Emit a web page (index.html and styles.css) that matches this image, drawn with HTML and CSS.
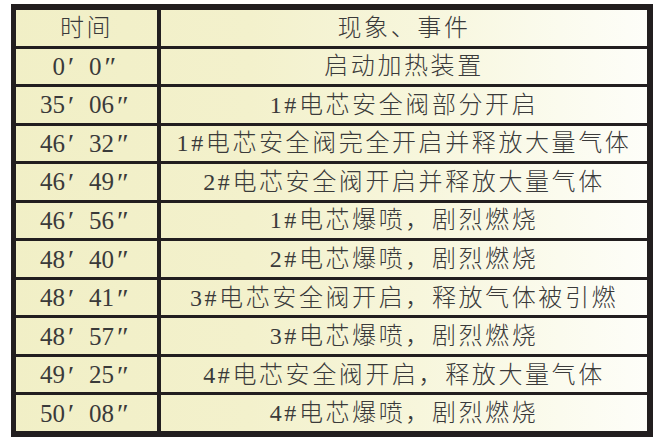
FILE: index.html
```html
<!DOCTYPE html>
<html lang="zh">
<head>
<meta charset="utf-8">
<link rel="stylesheet" href="styles.css">
</head>
<body>
<div class="table">
  <div class="cell">时间</div><div class="cell">现象、事件</div>
  <div class="cell t">0<span class="p">′</span> 0<span class="p">″</span></div><div class="cell">启动加热装置</div>
  <div class="cell t">35<span class="p">′</span> 06<span class="p">″</span></div><div class="cell">1#电芯安全阀部分开启</div>
  <div class="cell t">46<span class="p">′</span> 32<span class="p">″</span></div><div class="cell">1#电芯安全阀完全开启并释放大量气体</div>
  <div class="cell t">46<span class="p">′</span> 49<span class="p">″</span></div><div class="cell">2#电芯安全阀开启并释放大量气体</div>
  <div class="cell t">46<span class="p">′</span> 56<span class="p">″</span></div><div class="cell">1#电芯爆喷，剧烈燃烧</div>
  <div class="cell t">48<span class="p">′</span> 40<span class="p">″</span></div><div class="cell">2#电芯爆喷，剧烈燃烧</div>
  <div class="cell t">48<span class="p">′</span> 41<span class="p">″</span></div><div class="cell">3#电芯安全阀开启，释放气体被引燃</div>
  <div class="cell t">48<span class="p">′</span> 57<span class="p">″</span></div><div class="cell">3#电芯爆喷，剧烈燃烧</div>
  <div class="cell t">49<span class="p">′</span> 25<span class="p">″</span></div><div class="cell">4#电芯安全阀开启，释放大量气体</div>
  <div class="cell t">50<span class="p">′</span> 08<span class="p">″</span></div><div class="cell">4#电芯爆喷，剧烈燃烧</div>
</div>
</body>
</html>
```
FILE: styles.css
```css
html, body {
  margin: 0;
  padding: 0;
  background: #ffffff;
}
.table {
  box-sizing: border-box;
  margin: 4px 0 0 11px;
  width: 642px;
  height: 433px;
  border: 6px solid #221e1f;
  border-left-width: 5px;
  background: #221e1f;
  display: grid;
  grid-template-columns: 141px 486px;
  grid-template-rows: repeat(11, 1fr);
  column-gap: 4px;
  row-gap: 3px;
}
.cell {
  display: flex;
  align-items: center;
  justify-content: center;
  background: linear-gradient(to right, #f1efc6 0px, #f3f1cc 250px, #f7f6dc 420px, #fbfbee 560px, #fefefa 660px) fixed;
  font-family: "Liberation Serif", "Noto Sans CJK SC", serif;
  font-size: 24px;
  font-weight: 300;
  letter-spacing: 2.6px;
  color: #3a3a3a;
  white-space: nowrap;
  line-height: 1;
}
.cell.t {
  letter-spacing: 0;
  padding-left: 5px;
  font-size: 25px;
}
.p {
  display: inline-block;
  width: 24px;
  padding-left: 3px;
  box-sizing: border-box;
  text-align: left;
  font-family: "Liberation Serif", "DejaVu Serif", serif;
  font-size: 28px;
  position: relative;
  top: 1px;
}
```
